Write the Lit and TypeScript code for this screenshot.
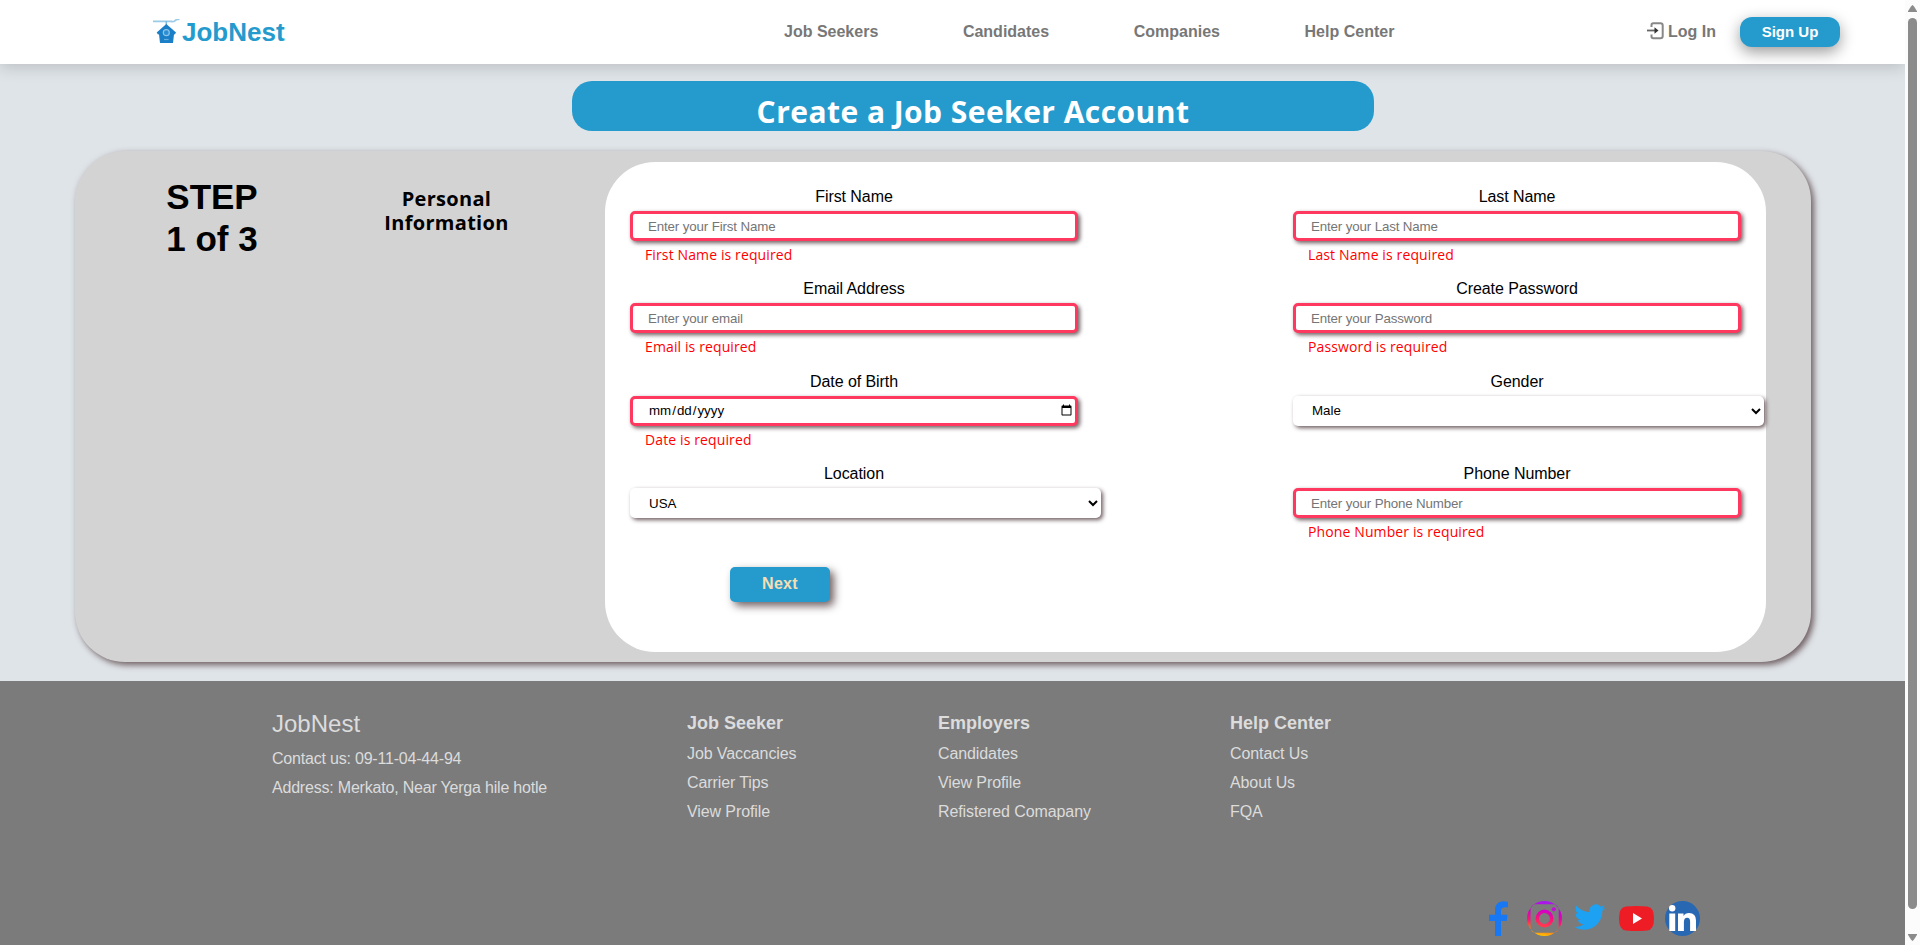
import { LitElement, html, css, svg } from "lit";
import { customElement } from "lit/decorators.js";

interface Field {
  label: string;
  kind: "text" | "date" | "select";
  value: string;
  error?: string;
}

const fields: Field[] = [
  { label: "First Name", kind: "text", value: "Enter your First Name", error: "First Name is required" },
  { label: "Last Name", kind: "text", value: "Enter your Last Name", error: "Last Name is required" },
  { label: "Email Address", kind: "text", value: "Enter your email", error: "Email is required" },
  { label: "Create Password", kind: "text", value: "Enter your Password", error: "Password is required" },
  { label: "Date of Birth", kind: "date", value: "", error: "Date is required" },
  { label: "Gender", kind: "select", value: "Male" },
  { label: "Location", kind: "select", value: "USA" },
  { label: "Phone Number", kind: "text", value: "Enter your Phone Number", error: "Phone Number is required" },
];

const columns = [
  { title: "Job Seeker", links: ["Job Vaccancies", "Carrier Tips", "View Profile"] },
  { title: "Employers", links: ["Candidates", "View Profile", "Refistered Comapany"] },
  { title: "Help Center", links: ["Contact Us", "About Us", "FQA"] },
];

const birdhouse = svg`
  <path d="M0 2.300h19M18 2.600l3-.2 2.500-1.800 3-.4" stroke="#9ccbe8" stroke-width="1.800" fill="none"/>
  <path d="M13.300 2v5" stroke="#7db9df" stroke-width="1.500"/>
  <path d="M13.300 5L23 13.500l-1.200 2-.8-.2-1 8.700H7l-1-8.700-1 .2L3.700 13.500z" fill="#1a7fc6"/>
  <circle cx="13.300" cy="13.700" r="3" fill="#2d8fd3" stroke="#8cc6ec" stroke-width="1.200"/>
  <path d="M11 20.500h4.600" stroke="#64aee0" stroke-width="1.200"/>`;

@customElement("app-root")
export class AppRoot extends LitElement {
  static styles = css`
    :host { display: flex; width: 1920px; height: 945px; overflow: hidden; background: #fcfcfc;
      font: 16px/18px "Liberation Sans", Arial, sans-serif; color: #000; }
    * { box-sizing: border-box; }
    .page { width: 1905px; height: 945px; display: flex; flex-direction: column; background: #dfe4e8; overflow: hidden; }
    .top { height: 64px; flex: none; background: #fff; display: flex; box-shadow: 0 3px 15px rgba(0, 0, 20, .17);
      padding-left: 153px; font-weight: bold; color: #777; z-index: 1; }
    .logo { display: flex; width: 630px; color: #259bcd; font-size: 26px; line-height: 28px; padding-top: 18px; gap: 2px; }
    .logo svg { margin-top: 1px; }
    .nav { display: flex; gap: 84.6px; width: 864px; padding: 23px 0 0 1px; }
    .login { display: flex; width: 93px; padding-top: 22px; gap: 4px; line-height: 20px; }
    .login svg { flex: none; }
    .signup { width: 100px; height: 30px; margin-top: 17px; border-radius: 12px; background: #259bcd; color: #fff;
      font-size: 15px; line-height: 30px; text-align: center; box-shadow: 0 5px 15px rgba(0, 0, 0, .4); }
    .title { flex: none; width: 802px; height: 50px; margin: 17px 0 0 572px; border-radius: 20px; background: #259bcd; color: #fff;
      font: 700 30px/61px "Open Sans", sans-serif; letter-spacing: .45px; text-align: center; white-space: nowrap; }
    .card { flex: none; display: flex; width: 1736px; height: 511px; margin: 20px 0 0 75px; border-radius: 50px;
      background: #d3d3d3; box-shadow: 3px 3px 6px #706063, 0 0 4px rgba(215, 219, 230, .5); padding-top: 11px; }
    .step { width: 197px; padding: 14px 0 0 0; margin-left: 38.5px; font-size: 35px; line-height: 42px; font-weight: bold; text-align: center; }
    .info { width: 274px; padding: 25px 0 0; font: 700 20px/24px "Open Sans", sans-serif; letter-spacing: .3px; text-align: center; margin: 0 21.5px 0 -1px; }
    .panel { width: 1161px; height: 490px; border-radius: 50px; background: #fff; padding: 24px 0 0 25px; }
    .fields { display: grid; grid-template-columns: 448px 448px; column-gap: 215px; grid-auto-rows: 92.4px; }
    .label { text-align: center; height: 25px; line-height: 22px; letter-spacing: -.07px; }
    .control { display: block; width: 448px; height: 30px; border: 3px solid #ff385f; border-radius: 5px; background: #fff;
      padding: 0 15px; font: 13.333px "Liberation Sans", Arial, sans-serif; outline: none; box-shadow: 2px 2px 4px #6e5c60; }
    .control::placeholder { color: #757575; letter-spacing: -.14px; }
    .date { padding-right: 0; }
    .select { width: 471px; border: 0; padding: 0 0 0 15px; }
    .error { color: #f00; font: 14px/20px "Open Sans", sans-serif; letter-spacing: .12px; padding: 4px 0 0 15px; }
    .next { display: block; width: 100px; height: 35px; margin: 11px 0 0 100px; border: 0; border-radius: 5px; background: #259bcd;
      color: #f5deb3; font: bold 16px/20px "Liberation Sans", Arial, sans-serif; letter-spacing: .3px; padding: 0 0 1px;
      box-shadow: 4px 4px 8px #706063; }
    .footer { flex: none; height: 264px; margin-top: 19px; background: #7b7b7b; color: #dcdcdc; display: flex; flex-direction: column; }
    .cols { display: flex; padding: 31px 0 0 272px; height: 220px; }
    .about { width: 415px; }
    .about .line { letter-spacing: -.2px; }
    .brand { font-size: 24px; line-height: 24px; padding-bottom: 8px; }
    .line { line-height: 29px; letter-spacing: -.1px; }
    .h { font-size: 18px; font-weight: bold; line-height: 22px; padding-bottom: 5px; }
    .c0 { width: 251px; }
    .c1 { width: 292px; }
    .social { display: flex; padding-left: 1481px; gap: 11px; }
    .bar { width: 15px; display: flex; flex-direction: column; align-items: center; padding: 5px 0 4px 0; }
    .thumb { width: 9px; height: 891px; margin: 6px 0 25px; border-radius: 5px; background: #8b8b8b; }
    .bar svg { flex: none; }
  `;

  private control(f: Field) {
    if (f.kind === "select") return html`<select class="control select"><option>${f.value}</option></select>`;
    if (f.kind === "date") return html`<input class="control date" type="date" />`;
    return html`<input class="control" placeholder=${f.value} />`;
  }

  render() {
    return html`
      <div class="page">
        <header class="top">
          <div class="logo">
            <svg width="27" height="26" viewBox="0 0 27 26">${birdhouse}</svg>JobNest
          </div>
          <nav class="nav">
            <span>Job Seekers</span><span>Candidates</span><span>Companies</span><span>Help Center</span>
          </nav>
          <div class="login">
            <svg width="17" height="18" viewBox="0 0 17 18" fill="none">
              <path d="M4.500 5V3Q4.500 1.200 6.300 1.200H13.500Q15.700 1.200 15.700 3.500V14Q15.700 16.300 13.500 16.300H6.300Q4.500 16.300 4.500 14.500V12.500" stroke="#888" stroke-width="2"/>
              <path d="M0 8.500h8" stroke="#666" stroke-width="1.800"/>
              <path d="M7.500 5.300L11.500 8.500l-4 3.200z" fill="#333"/>
            </svg>
            <span>Log In</span>
          </div>
          <div class="signup">Sign Up</div>
        </header>
        <div class="title">Create a Job Seeker Account</div>
        <main class="card">
          <div class="step">STEP<br />1 of 3</div>
          <div class="info">Personal<br />Information</div>
          <section class="panel">
            <div class="fields">
              ${fields.map((f) => html`
                <div class="field">
                  <div class="label">${f.label}</div>
                  ${this.control(f)}
                  ${f.error ? html`<div class="error">${f.error}</div>` : ""}
                </div>`)}
            </div>
            <button class="next">Next</button>
          </section>
        </main>
        <footer class="footer">
          <div class="cols">
            <div class="about">
              <div class="brand">JobNest</div>
              <div class="line">Contact us: 09-11-04-44-94</div>
              <div class="line">Address: Merkato, Near Yerga hile hotle</div>
            </div>
            ${columns.map((c, i) => html`
              <div class="c${i}">
                <div class="h">${c.title}</div>
                ${c.links.map((l) => html`<div class="line">${l}</div>`)}
              </div>`)}
          </div>
          <div class="social">
            <svg width="35" height="35" viewBox="0 0 35 35"><path d="M14 35V20H8v-6.300h6V9.500Q14 .5 22 .3q3 0 5 .6v5.400h-3q-4 0-4 3.700v3.700h6.600L25.600 20H20v15z" fill="#1877f2"/></svg>
            <svg width="35" height="35" viewBox="0 0 35 35">
              <defs>
                <linearGradient id="ig" x1=".55" y1="0" x2=".4" y2="1">
                  <stop offset="0" stop-color="#a01cf0"/><stop offset=".35" stop-color="#d300c5"/>
                  <stop offset=".6" stop-color="#ff1672"/><stop offset=".8" stop-color="#ff6a1c"/><stop offset="1" stop-color="#ffc800"/>
                </linearGradient>
                <linearGradient id="lens" x1=".55" y1="0" x2=".4" y2="1">
                  <stop offset="0" stop-color="#d300c5"/><stop offset=".6" stop-color="#ff1672"/><stop offset="1" stop-color="#ff3a50"/>
                </linearGradient>
              </defs>
              <path fill="url(#ig)" fill-rule="evenodd" d="M17.500 0a17.500 17.500 0 1 1 0 35a17.500 17.500 0 0 1 0-35zM9 3.300Q3.500 3.300 3.500 9V26Q3.500 31.700 9 31.700H26Q31.700 31.700 31.700 26V9Q31.700 3.300 26 3.300z"/>
              <circle cx="17.500" cy="17.500" r="7.200" fill="none" stroke="url(#lens)" stroke-width="3.500"/>
              <circle cx="26.800" cy="8.300" r="2.100" fill="#c410d8"/>
            </svg>
            <svg width="35" height="35" viewBox="0 0 35 35"><g transform="translate(1.300 .5) scale(1.300)"><path d="M23.950 4.570a10 10 0 0 1-2.820.77 4.960 4.960 0 0 0 2.160-2.720c-.95.550-2 .95-3.120 1.180a4.920 4.920 0 0 0-8.380 4.480C7.690 8.090 4.070 6.130 1.640 3.160a4.920 4.920 0 0 0 1.520 6.570 4.900 4.900 0 0 1-2.230-.61v.06a4.920 4.920 0 0 0 3.950 4.830 5 5 0 0 1-2.210.08 4.940 4.940 0 0 0 4.600 3.420A9.870 9.870 0 0 1 0 19.540a14 14 0 0 0 7.550 2.210c9.050 0 14-7.500 14-13.980 0-.21 0-.42-.02-.63a9.940 9.940 0 0 0 2.460-2.550z" fill="#1da1f2"/></g></svg>
            <svg width="35" height="35" viewBox="0 0 35 35"><path d="M7 5.600Q17.500 4.600 28 5.600Q35 6.200 35 17.500Q35 29 28 29.600Q17.500 30.600 7 29.600Q0 29 0 17.500Q0 6.200 7 5.600z" fill="#ee1c25"/><path d="M14 12v11l9-5.500z" fill="#fff"/></svg>
            <svg width="35" height="35" viewBox="0 0 35 35"><circle cx="17.500" cy="17.500" r="17.500" fill="#2867b2"/><g fill="#fff"><circle cx="7.200" cy="7.300" r="3.200"/><path d="M4.300 12.500h5.900V30H4.300zM13 12.500h5.500v2.400q1.700-2.900 5.500-2.900 7 0 7 7.500V30h-5.900v-9.300q0-4-2.800-4-3.400 0-3.400 4.300v9H13z"/></g></svg>
          </div>
        </footer>
      </div>
      <div class="bar">
        <svg width="9" height="7" viewBox="0 0 9 7"><path d="M4.500 0Q5.300 0 9 6.200V7H0V6.200Q3.700 0 4.500 0z" fill="#8b8b8b"/></svg>
        <div class="thumb"></div>
        <svg width="9" height="7" viewBox="0 0 9 7"><path d="M4.500 7Q5.300 7 9 .8V0H0V.8Q3.700 7 4.500 7z" fill="#8b8b8b"/></svg>
      </div>`;
  }
}
